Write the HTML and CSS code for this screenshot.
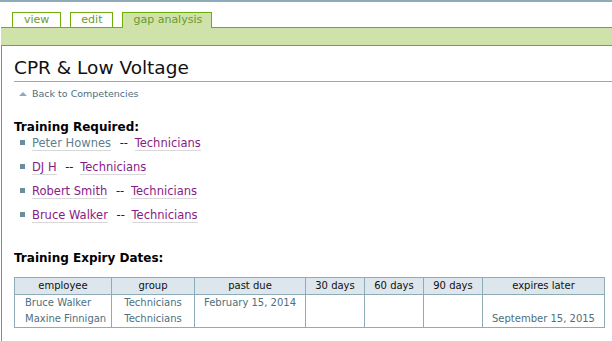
FILE: index.html
```html
<!DOCTYPE html>
<html lang="en">
<head>
    <meta charset="UTF-8">
    <title>CPR &amp; Low Voltage</title>
    <link rel="stylesheet" href="styles.css">
</head>
<body>
    <div class="topline"></div>
    <ul class="tabs">
        <li><a href="#">view</a></li>
        <li><a href="#">edit</a></li>
        <li class="active"><a href="#">gap analysis</a></li>
    </ul>
    <div class="page">
        <div class="tabbar"></div>
        <div class="content">
            <h1>CPR &amp; Low Voltage</h1>
            <a class="back" href="#"><span class="arrow"></span>Back to Competencies</a>

            <h3>Training Required:</h3>
            <ul class="required">
                <li><a class="visited" href="#">Peter Hownes</a> -- <a href="#">Technicians</a></li>
                <li><a href="#">DJ H</a> -- <a href="#">Technicians</a></li>
                <li><a href="#">Robert Smith</a> -- <a href="#">Technicians</a></li>
                <li><a href="#">Bruce Walker</a> -- <a href="#">Technicians</a></li>
            </ul>

            <h3 class="expiry">Training Expiry Dates:</h3>
            <table class="dates">
                <thead>
                    <tr>
                        <th class="c-emp">employee</th>
                        <th class="c-grp">group</th>
                        <th class="c-past">past due</th>
                        <th class="c-days">30 days</th>
                        <th class="c-days">60 days</th>
                        <th class="c-days">90 days</th>
                        <th>expires later</th>
                    </tr>
                </thead>
                <tbody>
                    <tr>
                        <td class="left">Bruce Walker<br>Maxine Finnigan</td>
                        <td>Technicians<br>Technicians</td>
                        <td>February 15, 2014<br>&nbsp;</td>
                        <td></td>
                        <td></td>
                        <td></td>
                        <td>&nbsp;<br>September 15, 2015</td>
                    </tr>
                </tbody>
            </table>
        </div>
    </div>
</body>
</html>
```

FILE: styles.css
```css
* {
    box-sizing: border-box;
    margin: 0;
    padding: 0;
}
body {
    font-family: "DejaVu Sans", Verdana, sans-serif;
    color: #000;
    background-color: #fff;
    width: 612px;
    overflow: hidden;
}
.topline {
    height: 2px;
    background-color: #8eabb8;
}
.tabs {
    list-style: none;
    display: flex;
    padding: 10px 0 0 12px;
    margin-bottom: -1px;
}
.tabs li {
    position: relative;
    z-index: 1;
    height: 15px;
    margin-right: 9px;
    border: 1px solid #6fae0c;
    border-bottom: none;
    background-color: #fff;
}
.tabs a {
    display: block;
    padding: 0 11px;
    font-size: 11px;
    line-height: 13px;
    color: #6a9a2e;
    text-decoration: none;
}
.tabs li:nth-child(2) a {
    padding: 0 10px;
}
.tabs li.active {
    height: 16px;
    background-color: #cfe2aa;
}
.tabs li.active a {
    padding: 0 9px 0 10px;
}
.page {
    margin-left: 1px;
    border-left: 1px solid #6fae0c;
    min-height: 320px;
}
.tabbar {
    height: 19px;
    margin-left: -1px;
    border-top: 1px solid #6fae0c;
    border-bottom: 1px solid #6fae0c;
    background-color: #cfe2aa;
}
.content {
    padding: 10px 0 0 12px;
}
h1 {
    font-size: 18.5px;
    font-weight: normal;
    line-height: 24px;
    color: #111;
    border-bottom: 1px solid #8eabb8;
    padding-bottom: 1px;
}
.back {
    display: inline-block;
    margin: 1px 0 0 5px;
    font-size: 9.5px;
    color: #4d6f80;
    text-decoration: none;
}
.arrow {
    display: inline-block;
    width: 0;
    height: 0;
    margin: 0 5px 1px 0;
    border-left: 4px solid transparent;
    border-right: 4px solid transparent;
    border-bottom: 4px solid #8eabb8;
}
h3 {
    font-size: 12px;
    font-weight: bold;
    margin-top: 18px;
    line-height: 16px;
}
.required {
    list-style: none;
    padding-left: 6px;
}
.required li {
    font-size: 11.5px;
    line-height: 16px;
    margin-bottom: 8px;
    color: #222;
}
.required li::before {
    content: "";
    display: inline-block;
    width: 5px;
    height: 5px;
    margin: 0 7px 2px 0;
    background-color: #6a8e9c;
}
.required a {
    color: #861c86;
    text-decoration: none;
    border-bottom: 1px solid #d8d8d8;
    margin-right: 5px;
}
.required a + a {
    margin-left: 3px;
}
.required a.visited {
    color: #5c7f8d;
}
h3.expiry {
    margin-top: 27px;
}
.dates {
    margin-top: 11px;
    width: 591px;
    border-collapse: collapse;
    font-size: 10px;
    line-height: 16px;
}
.dates th {
    font-weight: normal;
    color: #111;
    background-color: #dde6ec;
    border: 1px solid #8eabb8;
    padding: 0;
    text-align: center;
}
.dates td {
    vertical-align: top;
    color: #4d6f80;
    border: 1px solid #8eabb8;
    padding: 0;
    text-align: center;
}
.dates td.left {
    text-align: left;
    padding-left: 10px;
}
.dates tbody tr {
    height: 33px;
}
.c-emp {
    width: 97px;
}
.c-grp {
    width: 83px;
}
.c-past {
    width: 111px;
}
.c-days {
    width: 59px;
}
```
